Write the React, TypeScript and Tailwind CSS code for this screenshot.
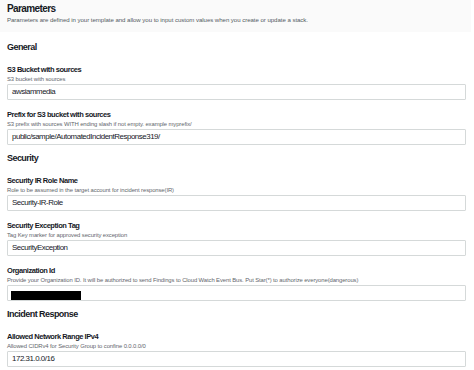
import React from "react";

type Field = {
  label: string;
  desc: string;
  value?: string;
  redacted?: boolean;
};

type Section = {
  title: string;
  fields: Field[];
};

const sections: Section[] = [
  {
    title: "General",
    fields: [
      { label: "S3 Bucket with sources", desc: "S3 bucket with sources", value: "awsiammedia" },
      {
        label: "Prefix for S3 bucket with sources",
        desc: "S3 prefix with sources WITH ending slash if not empty. example myprefix/",
        value: "public/sample/AutomatedIncidentResponse319/",
      },
    ],
  },
  {
    title: "Security",
    fields: [
      {
        label: "Security IR Role Name",
        desc: "Role to be assumed in the target account for incident response(IR)",
        value: "Security-IR-Role",
      },
      {
        label: "Security Exception Tag",
        desc: "Tag Key marker for approved security exception",
        value: "SecurityException",
      },
      {
        label: "Organization Id",
        desc: "Provide your Organization ID. It will be authorized to send Findings to Cloud Watch Event Bus. Put Star(*) to authorize everyone(dangerous)",
        redacted: true,
      },
    ],
  },
  {
    title: "Incident Response",
    fields: [
      {
        label: "Allowed Network Range IPv4",
        desc: "Allowed CIDRv4 for Security Group to confine 0.0.0.0/0",
        value: "172.31.0.0/16",
      },
    ],
  },
];

function ParamField({ field, first }: { field: Field; first: boolean }) {
  return (
    <div className={first ? "" : "mt-[10px]"}>
      <div className="h-[10px] text-[7.5px] leading-[10px] font-bold tracking-[-0.45px] text-[#16191f]">
        {field.label}
      </div>
      <div className="h-[8px] text-[5.9px] leading-[8px] tracking-[-0.1px] text-[#5f666d]">{field.desc}</div>
      <div className="mt-[1px] flex h-[16px] items-center rounded-[1px] border border-[#d5d9d9] bg-white px-[4px] text-[7.9px] tracking-[-0.45px] text-[#16191f]">
        {field.redacted ? (
          <span className="ml-[-1px] mt-[4px] h-[9px] w-[70px] bg-black" />
        ) : (
          field.value
        )}
      </div>
    </div>
  );
}

export default function App() {
  return (
    <div
      className="h-[370px] w-[474px] overflow-hidden bg-white"
      style={{ fontFamily: '"Liberation Sans", Arial, sans-serif' }}
    >
      <header className="mr-[3px] h-[32px] bg-[#fafafa] px-[7px] pt-[3px]">
        <h1 className="h-[11px] text-[10px] leading-[11px] font-bold tracking-[-0.6px] text-[#16191f]">
          Parameters
        </h1>
        <p className="mt-[2px] text-[6.1px] leading-[8px] tracking-[-0.05px] text-[#545b64]">
          Parameters are defined in your template and allow you to input custom values when you create or update a stack.
        </p>
      </header>

      <div className="pl-[7px] pr-[8px]">
        {sections.map((section, i) => (
          <section key={section.title} className={i === 0 ? "pt-[9px]" : "pt-[7px]"}>
            <h2 className="mb-[12px] h-[12px] text-[9px] leading-[12px] font-bold tracking-[-0.55px] text-[#16191f]">
              {section.title}
            </h2>
            {section.fields.map((f, j) => (
              <ParamField key={f.label} field={f} first={j === 0} />
            ))}
          </section>
        ))}
      </div>
    </div>
  );
}
